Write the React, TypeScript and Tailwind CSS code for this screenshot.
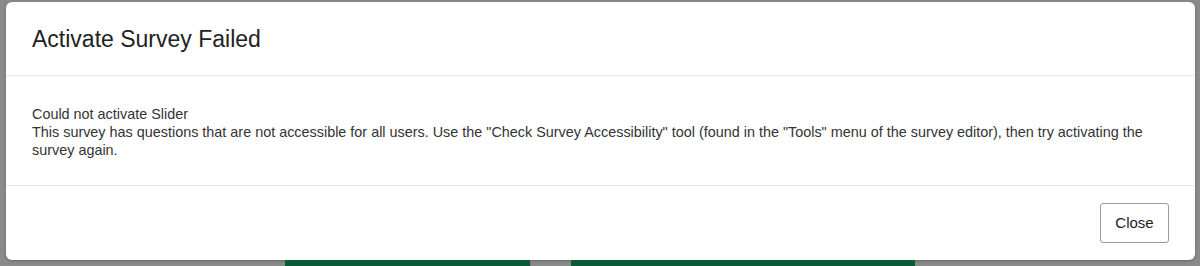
export default function App() {
  return (
    <div className="w-[1200px] h-[266px] bg-[#8a8a8a] overflow-hidden flex flex-col font-['Liberation_Sans',Arial,sans-serif]">
      <div className="pt-[2px] pl-[6px] pr-[5px] shrink-0">
        {/* Modal */}
        <div className="h-[258px] bg-white rounded-[6px] flex flex-col shadow-[0_1px_3px_rgba(0,0,0,0.25)]">
          <div className="h-[74px] border-b border-[#e6e6e6] flex items-center px-[26px] pt-[2px] shrink-0">
            <h2 className="text-[23px] text-[#222] leading-none">Activate Survey Failed</h2>
          </div>
          <div className="h-[110px] pt-[29px] px-[26px] text-[14.4px] leading-[18px] text-[#333] border-b border-[#e6e6e6] shrink-0">
            <p>Could not activate Slider</p>
            <p>
              This survey has questions that are not accessible for all users. Use the "Check Survey Accessibility" tool
              (found in the "Tools" menu of the survey editor), then try activating the survey again.
            </p>
          </div>
          <div className="flex-1 flex items-start justify-end pt-[17px] pr-[26px]">
            <button className="w-[69px] h-[40px] border border-[#9a9a9a] rounded-[3px] bg-white text-[15px] text-[#222]">
              Close
            </button>
          </div>
        </div>
      </div>
      {/* Page behind the overlay */}
      <div className="flex-1 flex">
        <div className="w-[285px]" />
        <div className="w-[245px] bg-[#0b5a33]" />
        <div className="w-[41px] border-l border-[#7a7a7a]" />
        <div className="w-[344px] bg-[#0b5a33]" />
      </div>
    </div>
  )
}
